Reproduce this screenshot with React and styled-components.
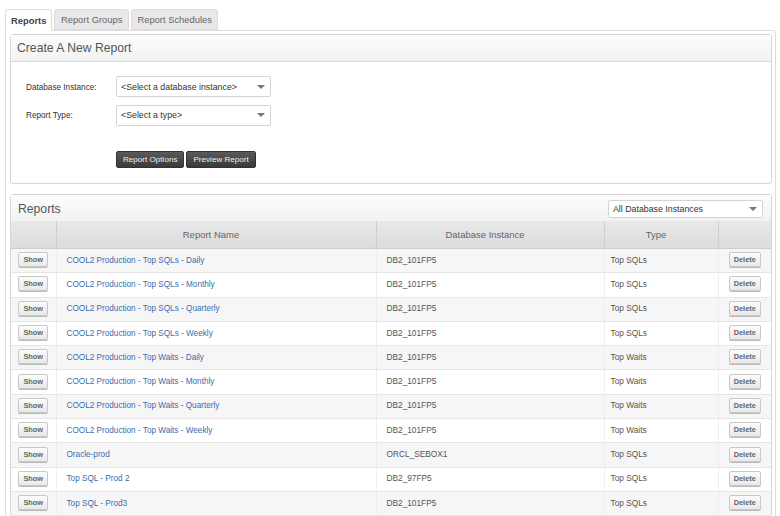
import React from 'react';
import styled, { createGlobalStyle } from 'styled-components';

const GlobalStyle = createGlobalStyle`
  html, body {
    margin: 0;
    padding: 0;
    background: #fff;
    font-family: "Liberation Sans", Arial, sans-serif;
    overflow: hidden;
  }
`;

const Page = styled.div`
  width: 780px;
  height: 516px;
  overflow: hidden;
  padding: 9px 0 0 5px;
  box-sizing: border-box;
`;

const TabBar = styled.div`
  display: flex;
  gap: 2px;
  height: 22px;
  position: relative;
  z-index: 1;
`;

const Tab = styled.div`
  height: ${p => (p.$active ? '22px' : '21px')};
  padding: 0 ${p => (p.$active ? '5px' : '5.5px')};
  display: flex;
  align-items: center;
  font-size: 9.4px;
  font-weight: ${p => (p.$active ? 'bold' : 'normal')};
  color: ${p => (p.$active ? '#444' : '#666')};
  background: ${p => (p.$active ? '#fff' : '#e8e8e8')};
  border: 1px solid #ddd;
  border-bottom: ${p => (p.$active ? 'none' : '1px solid #ddd')};
  border-radius: 3px 3px 0 0;
  box-sizing: border-box;
`;

const TabBody = styled.div`
  width: 771px;
  height: 500px;
  box-sizing: border-box;
  margin-top: -1px;
  border: 1px solid #ddd;
  border-radius: 3px;
  padding: 3px 3px 0 4px;
`;

const Panel = styled.div`
  border: 1px solid #d6d6d6;
  border-radius: 3px;
  background: #fff;
  margin-bottom: 10px;
`;

const PanelHead = styled.div`
  height: ${p => (p.$plain ? '26px' : '27px')};
  padding: ${p => (p.$plain ? '1px 8px 0 7px' : '0 8px 0 6px')};
  box-sizing: border-box;
  display: flex;
  align-items: center;
  justify-content: space-between;
  background: linear-gradient(#fdfdfd, #f2f2f2);
  border-bottom: ${p => (p.$plain ? 'none' : '1px solid #d9d9d9')};
  font-size: 12.2px;
  color: #555;
`;

const FormBody = styled.div`
  height: 121px;
  padding: 14px 0 0 15px;
  box-sizing: border-box;
  display: grid;
  grid-template-columns: 90px 155px;
  grid-template-rows: 21px 21px auto;
  row-gap: 7.5px;
  align-items: center;
`;

const Label = styled.label`
  font-size: 8.2px;
  color: #333;
  padding-top: 1px;
`;

const Select = styled.div`
  height: ${p => p.$h || '21px'};
  box-sizing: border-box;
  width: 155px;
  border: 1px solid #d4d4d4;
  border-radius: 2px;
  background: #fff;
  padding: 0 5px 0 4px;
  display: flex;
  align-items: center;
  justify-content: space-between;
  font-size: 8.8px;
  color: #333;
  &::after {
    content: '';
    border: 4px solid transparent;
    border-top: 4px solid #777;
    border-bottom: 0;
  }
`;

const Actions = styled.div`
  grid-column: 2;
  align-self: start;
  margin-top: 18px;
  display: flex;
  gap: 2px;
`;

const DarkButton = styled.button`
  height: 17px;
  padding: 0 6px;
  border: 1px solid #333;
  border-radius: 2px;
  background: linear-gradient(#5a5a5a, #3a3a3a);
  color: #eee;
  font: 8.1px "Liberation Sans", Arial, sans-serif;
`;

const Table = styled.table`
  width: 100%;
  border-collapse: collapse;
  table-layout: fixed;
`;

const Th = styled.th`
  height: 27px;
  padding: 0 10px 0 0;
  font-size: 9.5px;
  font-weight: normal;
  color: #666;
  background: linear-gradient(#e8e8e8, #dcdcdc);
  border-left: 1px solid #cfcfcf;
  border-bottom: 1px solid #ccc;
  &:first-child { border-left: none; }
`;

const Row = styled.tr`
  background: ${p => (p.$odd ? '#f6f6f6' : '#fff')};
`;

const Td = styled.td`
  height: 21.3px;
  padding: 0 0 2px ${p => p.$pad || 0}px;
  text-align: ${p => (p.$center ? 'center' : 'left')};
  font-size: 8.3px;
  color: #555;
  border-left: 1px solid #eee;
  border-bottom: 1px solid #e6e6e6;
  &:first-child { border-left: none; }
`;

const NameLink = styled.a`
  color: #3b6cb0;
  font-size: 8.2px;
`;

const SmallButton = styled.button`
  height: 15px;
  padding: 0 4px;
  min-width: ${p => p.$w};
  border: 1px solid #c8c8c8;
  border-radius: 2px;
  background: linear-gradient(#fcfcfc, #e9e9e9);
  color: #666;
  font: bold 7.4px "Liberation Sans", Arial, sans-serif;
  box-shadow: 0 1px 0 #bbb;
`;

const reports = [
  ['COOL2 Production - Top SQLs - Daily', 'DB2_101FP5', 'Top SQLs'],
  ['COOL2 Production - Top SQLs - Monthly', 'DB2_101FP5', 'Top SQLs'],
  ['COOL2 Production - Top SQLs - Quarterly', 'DB2_101FP5', 'Top SQLs'],
  ['COOL2 Production - Top SQLs - Weekly', 'DB2_101FP5', 'Top SQLs'],
  ['COOL2 Production - Top Waits - Daily', 'DB2_101FP5', 'Top Waits'],
  ['COOL2 Production - Top Waits - Monthly', 'DB2_101FP5', 'Top Waits'],
  ['COOL2 Production - Top Waits - Quarterly', 'DB2_101FP5', 'Top Waits'],
  ['COOL2 Production - Top Waits - Weekly', 'DB2_101FP5', 'Top Waits'],
  ['Oracle-prod', 'ORCL_SEBOX1', 'Top SQLs'],
  ['Top SQL - Prod 2', 'DB2_97FP5', 'Top SQLs'],
  ['Top SQL - Prod3', 'DB2_101FP5', 'Top SQLs'],
];

export default function App() {
  return (
    <Page>
      <GlobalStyle />
      <TabBar>
        <Tab $active>Reports</Tab>
        <Tab>Report Groups</Tab>
        <Tab>Report Schedules</Tab>
      </TabBar>
      <TabBody>
        <Panel>
          <PanelHead>Create A New Report</PanelHead>
          <FormBody>
            <Label>Database Instance:</Label>
            <Select>&lt;Select a database instance&gt;</Select>
            <Label>Report Type:</Label>
            <Select>&lt;Select a type&gt;</Select>
            <Actions>
              <DarkButton>Report Options</DarkButton>
              <DarkButton>Preview Report</DarkButton>
            </Actions>
          </FormBody>
        </Panel>
        <Panel>
          <PanelHead $plain>
            Reports
            <Select $h="18px">All Database Instances</Select>
          </PanelHead>
          <Table>
            <colgroup>
              <col width="45" />
              <col width="320" />
              <col width="228" />
              <col width="114" />
              <col />
            </colgroup>
            <thead>
              <tr>
                <Th />
                <Th>Report Name</Th>
                <Th>Database Instance</Th>
                <Th>Type</Th>
                <Th />
              </tr>
            </thead>
            <tbody>
              {reports.map((r, i) => (
                <Row key={r[0]} $odd={i % 2 === 0}>
                  <Td $center><SmallButton $w="28px">Show</SmallButton></Td>
                  <Td $pad={10}><NameLink>{r[0]}</NameLink></Td>
                  <Td $pad={10}>{r[1]}</Td>
                  <Td $pad={6}>{r[2]}</Td>
                  <Td $center><SmallButton $w="31px">Delete</SmallButton></Td>
                </Row>
              ))}
            </tbody>
          </Table>
        </Panel>
      </TabBody>
    </Page>
  );
}
